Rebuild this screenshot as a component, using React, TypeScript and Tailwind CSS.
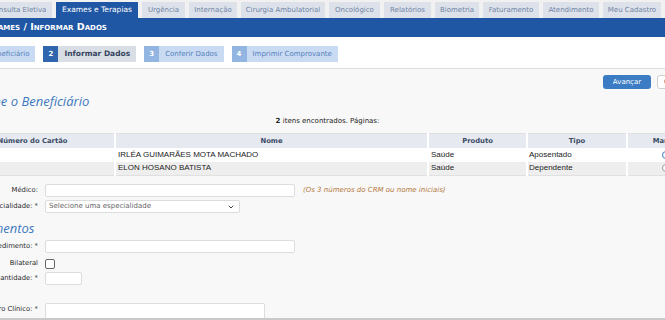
import { ChevronDown } from 'lucide-react';

const tabs = [
  { label: 'Consulta Eletiva', w: 'w-[68px]' },
  { label: 'Exames e Terapias', w: 'w-[82px]', active: true },
  { label: 'Urgência', w: 'w-[43px]' },
  { label: 'Internação', w: 'w-[48px]' },
  { label: 'Cirurgia Ambulatorial', w: 'w-[84px]' },
  { label: 'Oncológico', w: 'w-[51px]' },
  { label: 'Relatórios', w: 'w-[47px]' },
  { label: 'Biometria', w: 'w-[44px]' },
  { label: 'Faturamento', w: 'w-[56px]' },
  { label: 'Atendimento', w: 'w-[56px]' },
  { label: 'Meu Cadastro', w: 'w-[58px]' },
  { label: 'Sair', w: 'w-[40px]' },
];

const steps = [
  { n: '1', label: 'Beneficiário', state: 'done' },
  { n: '2', label: 'Informar Dados', state: 'current' },
  { n: '3', label: 'Conferir Dados', state: 'next' },
  { n: '4', label: 'Imprimir Comprovante', state: 'next' },
];

const rows = [
  { nome: 'IRLÉA GUIMARÃES MOTA MACHADO', produto: 'Saúde', tipo: 'Aposentado', checked: true },
  { nome: 'ELON HOSANO BATISTA', produto: 'Saúde', tipo: 'Dependente', checked: false },
];

function Label({ children }: { children: React.ReactNode }) {
  return (
    <div className="pr-[7px] text-right text-[6.8px] leading-[13px] text-[#2b2b2b]">{children}</div>
  );
}

export default function App() {
  return (
    <div className="relative h-[320px] w-[665px] overflow-hidden border-b-2 border-[#c9c9c9] bg-[#f8f8f8] font-['DejaVu_Sans',sans-serif]">
      <div className="-ml-[49px] w-[753px]">
        {/* Tabs */}
        <div className="flex gap-[4px] bg-[#f1f1f1] pl-[33px] pt-[2px]">
          {tabs.map((t) => (
            <div
              key={t.label}
              className={`${t.w} flex h-[16px] shrink-0 items-center justify-center whitespace-nowrap ${
                t.active ? 'bg-[#1f57a5] text-[7.5px] text-white' : 'bg-[#dde2ea] text-[7px] text-[#6f82a6]'
              }`}
            >
              {t.label}
            </div>
          ))}
        </div>

        {/* Breadcrumb */}
        <div className="flex h-[19px] items-center bg-[#1f57a5] pl-[35px] text-[9.5px] font-bold text-white [font-variant:small-caps]">
          Exames / Informar Dados
        </div>

        {/* Steps */}
        <div className="flex h-[32px] items-start gap-[8px] border-b border-[#dedede] bg-white pl-[16px] pt-[9px]">
          {steps.map((s) => (
            <div key={s.n} className="flex h-[16px] items-stretch text-[7px]">
              <div
                className={`flex w-[15px] items-center justify-center font-bold text-white ${
                  s.state === 'current' ? 'bg-[#2f66ad]' : 'bg-[#92b5e1]'
                }`}
              >
                {s.n}
              </div>
              <div
                className={`flex items-center whitespace-nowrap px-[6px] ${
                  s.state === 'current'
                    ? 'bg-[#d9dde4] text-[7.5px] font-bold text-[#34435f]'
                    : 'bg-[#c8dbf2] text-[#5580bb]'
                }`}
              >
                {s.label}
              </div>
            </div>
          ))}
        </div>

        {/* Actions */}
        <div className="flex justify-end gap-[6px] pr-[2px] pt-[6px]">
          <button className="flex h-[14px] w-[48px] items-center justify-center rounded-[3px] bg-[#3b7cc4] text-[7px] text-white">
            Avançar
          </button>
          <button className="flex h-[14px] w-[45px] items-center justify-center rounded-[3px] border border-[#cfcfcf] bg-white text-[7px] text-[#555]">
            Cancelar
          </button>
        </div>

        <h2 className="mt-[4px] h-[16px] pl-[11px] font-['Open_Sans',sans-serif] text-[13px] italic leading-[16px] text-[#3c78c0]">
          Informe o Beneficiário
        </h2>

        <p className="mt-[6px] h-[12px] text-center text-[7px] leading-[12px] text-[#222]">
          <span className="font-bold">2</span> itens encontrados. Páginas:
        </p>

        {/* Table */}
        <table className="mt-[6px] w-[753px] table-fixed border-collapse border-y border-[#e0e0e0]">
          <colgroup>
            <col className="w-[164px]" />
            <col className="w-[313px]" />
            <col className="w-[99px]" />
            <col className="w-[100px]" />
            <col className="w-[77px]" />
          </colgroup>
          <thead>
            <tr className="h-[14px] bg-[#e6eaf0] text-[6.8px] font-bold text-[#3a4a66]">
              <th className="border-r-2 border-white">Número do Cartão</th>
              <th className="border-r-2 border-white">Nome</th>
              <th className="border-r-2 border-white">Produto</th>
              <th className="border-r-2 border-white">Tipo</th>
              <th>Marcar</th>
            </tr>
          </thead>
          <tbody className="font-['Liberation_Sans',sans-serif] text-[8px] text-[#222]">
            {rows.map((r, i) => (
              <tr key={r.nome} className={`h-[14px] ${i % 2 ? 'bg-[#eeeeee]' : 'bg-white'}`}>
                <td className="border-r-2 border-white" />
                <td className="border-r-2 border-white pl-[2px]">{r.nome}</td>
                <td className="border-r-2 border-white pl-[2px]">{r.produto}</td>
                <td className="border-r-2 border-white pl-[1px]">{r.tipo}</td>
                <td>
                  <div
                    className={`mx-auto h-[8px] w-[8px] rounded-full border bg-white ${
                      r.checked ? 'border-[#3b7cc4]' : 'border-[#999]'
                    }`}
                  />
                </td>
              </tr>
            ))}
          </tbody>
        </table>

        {/* Form */}
        <div className="mt-[8px] grid grid-cols-[94px_1fr] gap-y-[3px]">
          <Label>Médico:</Label>
          <div className="flex items-center gap-[8px]">
            <div className="h-[13px] w-[250px] rounded-[2px] border border-[#dcdcdc] bg-white" />
            <span className="text-[7px] italic text-[#b4773b]">(Os 3 números do CRM ou nome iniciais)</span>
          </div>
          <Label>Especialidade: *</Label>
          <div className="flex h-[13px] w-[195px] items-center justify-between rounded-[2px] border border-[#dcdcdc] bg-white pl-[3px] pr-[4px] text-[7px] text-[#666]">
            <span>Selecione uma especialidade</span>
            <ChevronDown className="h-[8px] w-[8px] text-[#444]" strokeWidth={3} />
          </div>
        </div>

        <h2 className="-ml-[2px] mt-[7px] h-[16px] font-['Open_Sans',sans-serif] text-[13px] italic leading-[16px] text-[#3c78c0]">
          Procedimentos
        </h2>

        <div className="mt-[4px] grid grid-cols-[94px_1fr]">
          <Label>Procedimento: *</Label>
          <div className="h-[13px] w-[250px] rounded-[2px] border border-[#dcdcdc] bg-white" />

          <div className="mt-[4px]">
            <Label>Bilateral</Label>
          </div>
          <div className="mt-[4px] flex h-[13px] items-center">
            <div className="h-[10px] w-[10px] rounded-[2px] border border-[#666] bg-white" />
          </div>

          <div className="mt-[2px]">
            <Label>Quantidade: *</Label>
          </div>
          <div className="mt-[2px] h-[13px] w-[37px] rounded-[2px] border border-[#dcdcdc] bg-white" />

          <div className="mt-[18px]">
            <Label>Quadro Clínico: *</Label>
          </div>
          <div className="mt-[18px] h-[30px] w-[220px] rounded-[2px] border border-[#dcdcdc] bg-white" />
        </div>
      </div>
    </div>
  );
}
